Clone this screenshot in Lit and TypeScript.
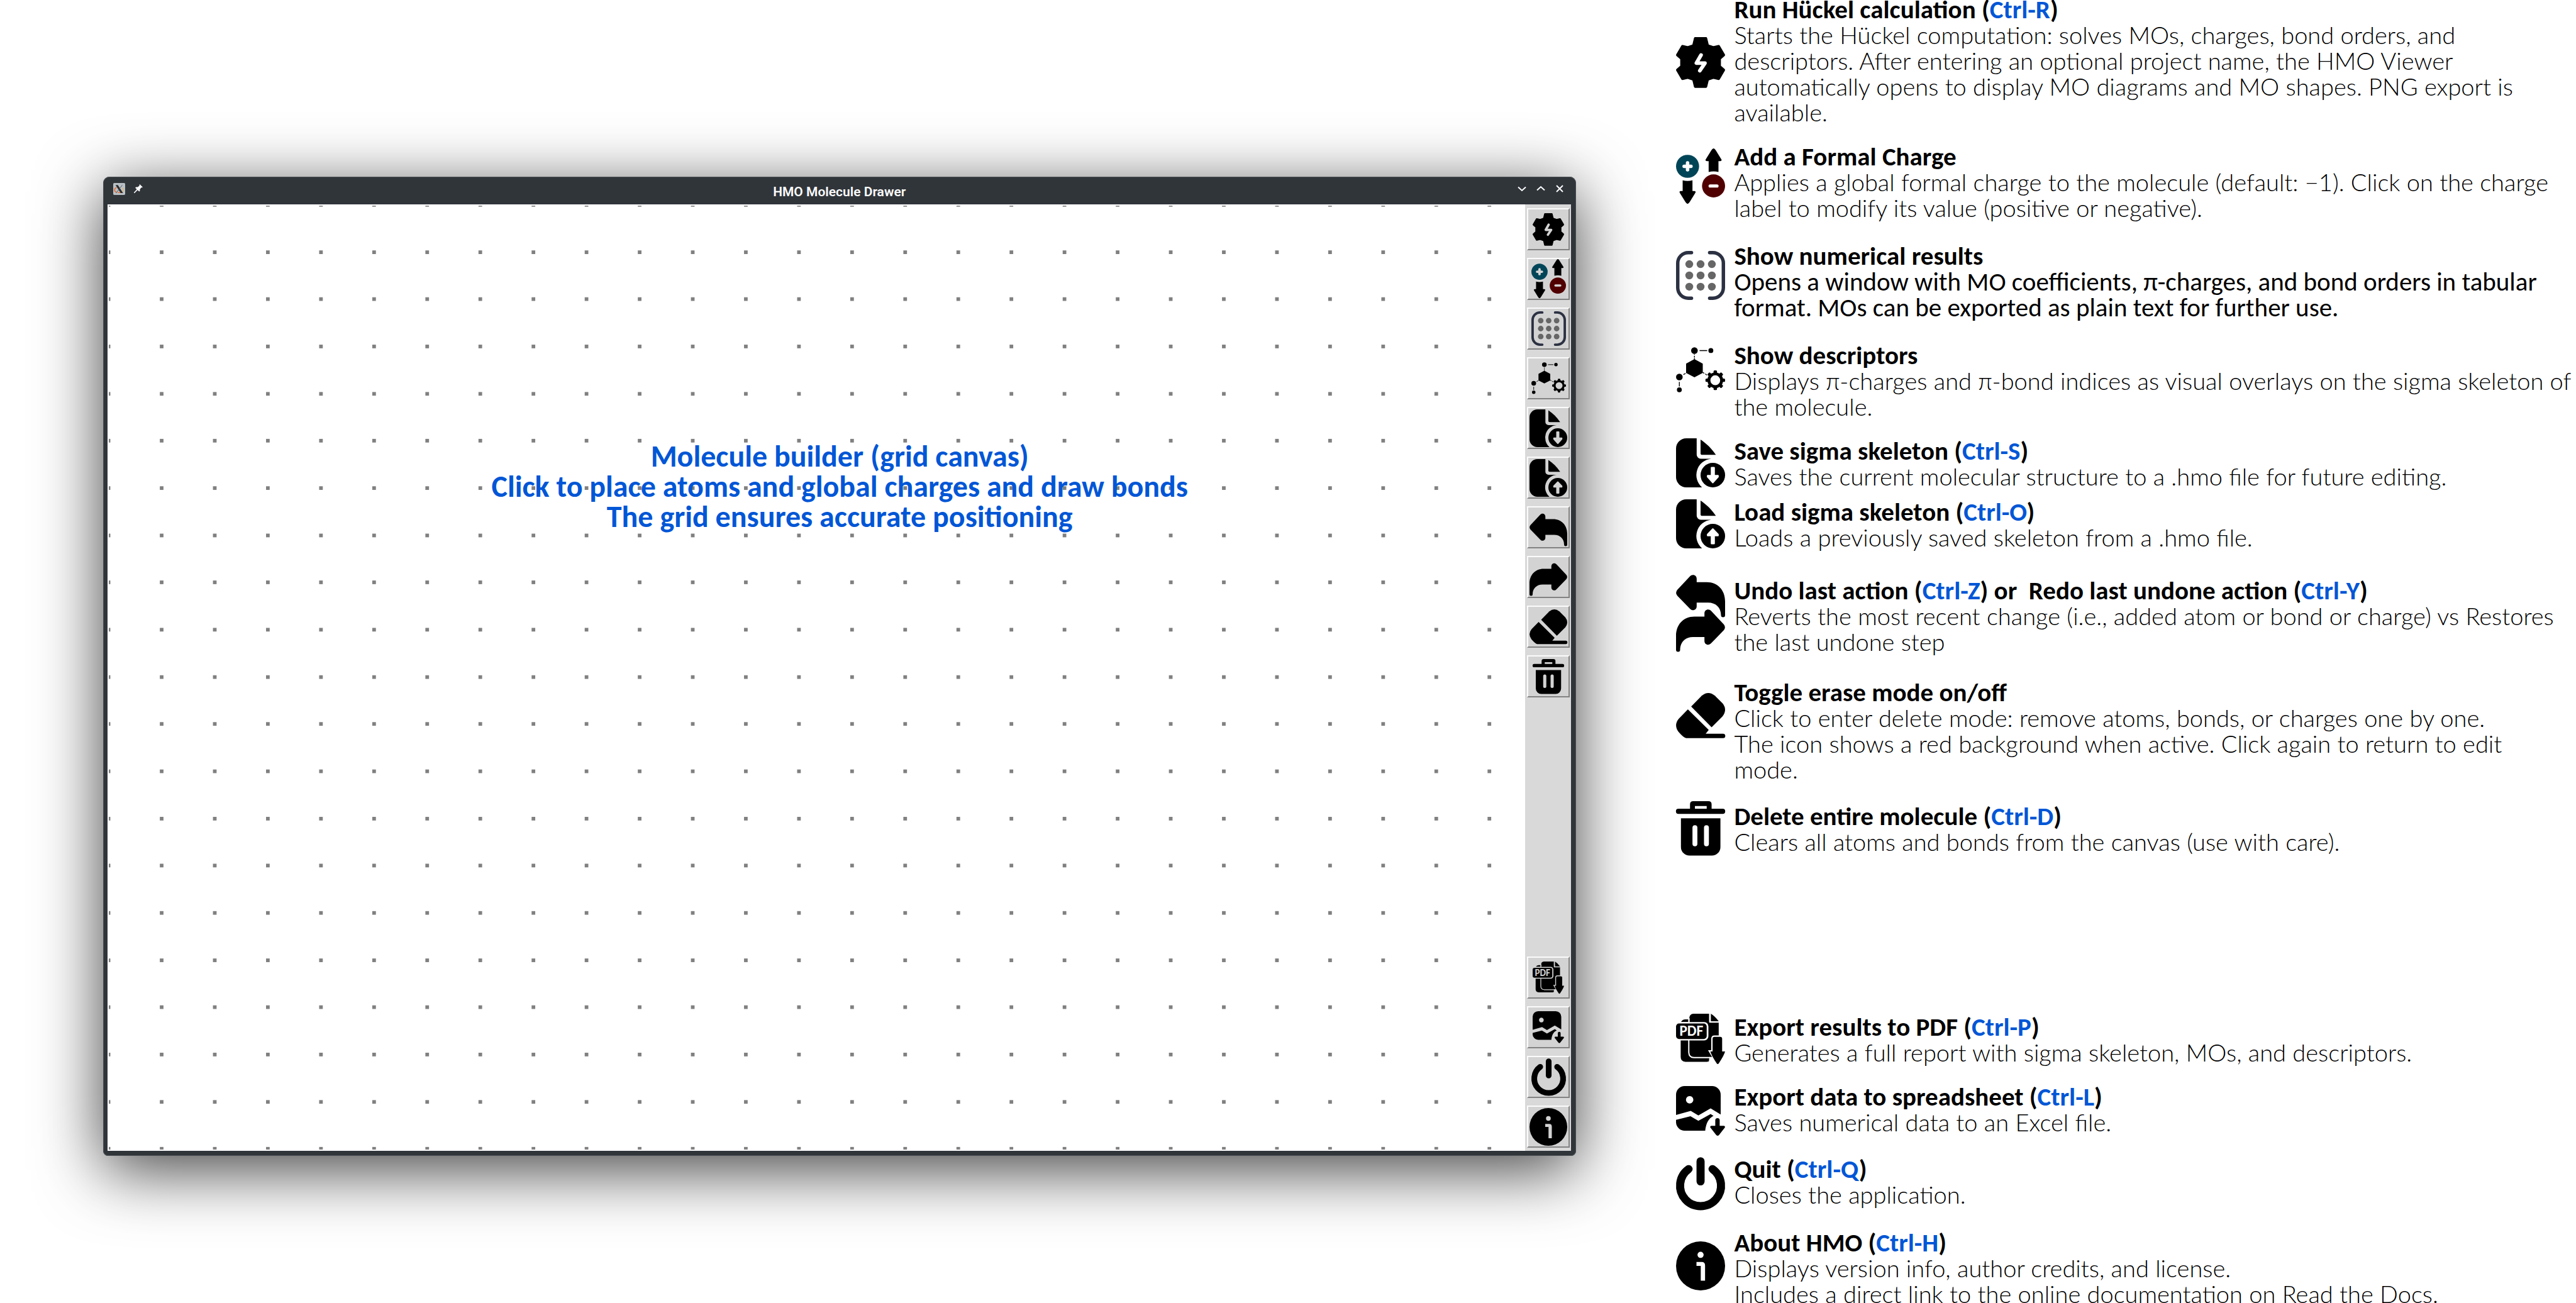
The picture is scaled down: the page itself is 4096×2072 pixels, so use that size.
import { LitElement, html, svg, css, type SVGTemplateResult, type TemplateResult } from "lit";
import { customElement, property } from "lit/decorators.js";

interface Glyph {
  box: string;
  art: SVGTemplateResult;
}

const sheet = svg`
  <path d="M5 0H10.1V8a2 2 0 0 0 2 2H17.2A8 8 0 0 0 12.7 24H5a5 5 0 0 1-5-5V5a5 5 0 0 1 5-5z"/>
  <path d="M12 .6C15 2.6 17.4 5 19.5 8.1H12.8Q12 8.1 12 7.3z"/>
  <circle cx="18" cy="18" r="6"/>`;

const undoArrow = svg`<path d="M.6 7.4 6.8.8C8-.5 10.1.1 10.1 2V3.6H15C20.5 3.6 24 7.6 24 13V19.8a1 1 0 0 1-2 0C22 16 19.4 13.6 15.7 13.6H10.1V15.5C10.1 17.3 8 18 6.8 16.6L.6 10.2Q-.5 8.8.6 7.4z"/>`;

const gearTeeth = [0, 45, 90, 135, 180, 225, 270, 315];

const glyphs: Record<string, Glyph> = {
  run: {
    box: "0 0 20 20.7",
    art: svg`
      <path stroke="currentColor" stroke-width="1" stroke-linejoin="round" d="M7.8.5H12.2L12.9 3.4 15.2 4.2 17.4 3.7 19.5 7.3 17.8 8.8V11.9L19.5 13.4 17.4 17 15.2 16.5 12.9 17.3 12.2 20.2H7.8L7.1 17.3 4.8 16.5 2.6 17 .5 13.4 2.2 11.9V8.8L.5 7.3 2.6 3.7 4.8 4.2 7.1 3.4z"/>
      <path class="cut-line" stroke-width="1.5" stroke-linecap="round" stroke-linejoin="round" d="M10.2 7.3 8.3 10.6H11.8L9.7 13.7"/>`,
  },
  charge: {
    box: "0 0 20 22.6",
    art: svg`
      <circle cx="4.7" cy="7.3" r="4.7" fill="#004557"/>
      <path class="cut-line" stroke-width="1.4" stroke-linecap="round" d="M4.7 5.9V8.7M3.3 7.3H6.1"/>
      <circle cx="15.3" cy="15.3" r="4.7" fill="#500000"/>
      <path class="cut-line" stroke-width="1.3" stroke-linecap="round" d="M13.9 15.3H16.7"/>
      <path d="M15.3 0Q15.7 0 16.2 .8L18.5 4.5Q18.8 5.2 18 5.2H17.3V9.6Q15.3 9.1 13.3 9.6V5.2H12.6Q11.8 5.2 12.1 4.5L14.4.8Q14.9 0 15.3 0z"/>
      <path d="M4.7 22.6Q5.1 22.6 5.6 21.8L7.9 18.1Q8.2 17.4 7.4 17.4H6.7V13Q4.7 13.5 2.7 13V17.4H2Q1.2 17.4 1.5 18.1L3.8 21.8Q4.3 22.6 4.7 22.6z"/>`,
  },
  matrix: {
    box: "0 0 20 20",
    art: svg`
      <path fill="none" stroke="#2b3142" stroke-width="1.4" stroke-linecap="round" d="M6.3.7H5A4.3 4.3 0 0 0 .7 5V15A4.3 4.3 0 0 0 5 19.3H6.3M13.7.7H15A4.3 4.3 0 0 1 19.3 5V15A4.3 4.3 0 0 1 15 19.3H13.7"/>
      ${[5.4, 10, 14.6].map((y) => [5.4, 10, 14.6].map((x) => svg`<circle cx=${x} cy=${y} r="1.6" fill="#666"/>`))}`,
  },
  descriptors: {
    box: "0 0 20 18.5",
    art: svg`
      <circle cx="7.5" cy="1.4" r="1.35"/><circle cx="14.2" cy="1.4" r="1"/>
      <circle cx="1.35" cy="12.2" r="1.35"/><circle cx="1.35" cy="17.4" r="1"/>
      <path fill="none" stroke="currentColor" stroke-width=".35" d="M9.6 1.4H12.7M1.35 14.2V16M7.5 2.8V3.1M7.5 3.5V4.2M7.5 4.5V5M3 11.2 3.9 10.7M4.2 10.5 4.6 10.3M10.9 10.3 11.5 10.7M11.9 10.9 12.6 11.4"/>
      <path d="M7.5 4.9 10.9 6.7V10.5L7.5 12.3 4.1 10.5V6.7z"/>
      <circle cx="16" cy="13.5" r="2.6" fill="none" stroke="currentColor" stroke-width="1.2"/>
      ${gearTeeth.map((a) => svg`<rect x="15.3" y="9.5" width="1.4" height="1.4" rx=".4" transform="rotate(${a} 16 13.5)"/>`)}`,
  },
  save: {
    box: "0 0 24 24",
    art: svg`${sheet}<path class="cut" stroke-width=".8" stroke-linejoin="round" d="M18 21.6 15.5 18.8V18.3H17.4V14.4H18.6V18.3H20.5V18.8z"/>`,
  },
  load: {
    box: "0 0 24 24",
    art: svg`${sheet}<path class="cut" stroke-width=".8" stroke-linejoin="round" d="M18 14.6 15.5 17.2V17.7H17.4V21.6H18.6V17.7H20.5V17.2z"/>`,
  },
  undo: { box: "0 -3.4 24 24.2", art: undoArrow },
  redo: { box: "0 -3.4 24 24.2", art: svg`<g transform="translate(24) scale(-1 1)">${undoArrow}</g>` },
  undoRedo: {
    box: "0 0 24 37.7",
    art: svg`${undoArrow}<g transform="translate(24 16.9) scale(-1 1)">${undoArrow}</g>`,
  },
  erase: {
    box: "0 0 24 22.2",
    art: svg`
      <path d="M7.4 6.6 12.6 1.3Q15.8-1.3 19 1.3L22.8 5.1Q25.2 8.2 22.8 11.4L17.4 16.8z"/>
      <path d="M5.8 8 16 18.1 14.5 19.9H23a1.1 1.1 0 0 1 0 2.2H5Q3.8 22 1.2 19-1.2 15.7 1.3 12.6z"/>`,
  },
  trash: {
    box: "0 0 20 22.2",
    art: svg`
      <path fill-rule="evenodd" d="M7 0H13.2Q14.5 0 14.5 1.3V3.1H19a1 1 0 0 1 0 2.1H1A1 1 0 0 1 1 3.1H5.7V1.3Q5.7 0 7 0zM7.7 2V3.1H12.5V2z"/>
      <path fill-rule="evenodd" d="M2 7H18.1V18.7A3.5 3.5 0 0 1 14.6 22.2H5.5A3.5 3.5 0 0 1 2 18.7zM6.7 10.8V17.4a1 1 0 0 0 2 0V10.8a1 1 0 0 0-2 0zM11.4 10.8V17.4a1 1 0 0 0 2 0V10.8a1 1 0 0 0-2 0z"/>`,
  },
  pdf: {
    box: "0 0 20 20.6",
    art: svg`
      <path d="M2 3.4Q2.6 2.3 3.8 2.3H5V3.4z"/>
      <path d="M1.9 10.4H13.6V17.5L13.4 19.4 12.6 19.6H3.8Q1.9 19.4 1.9 17.6z"/>
      <path d="M7.1 0H13.5V3.4H17.4V15.6Q17.2 17.5 15.4 17.6H7.4Q5.4 17.5 5.4 15.6V1.8Q5.5.1 7.1 0z"/>
      <path d="M14.2 0Q15.9 1 17.4 3.1H14.2z"/>
      <path class="cut-line" stroke-width=".5" d="M13.8 0V3.4H17.5M5.2 10.6V15.8Q5.3 17.8 7.3 17.9H14M5.3 3.4V1.8"/>
      <rect class="cut" stroke-width="1" x="0" y="3.9" width="12.7" height="6.5" rx="1.2"/>
      <rect x="0" y="4" width="12.5" height="6.3" rx="1.2"/>
      <text class="cut-text" x="6.25" y="9.1" text-anchor="middle">PDF</text>
      <path class="cut" stroke-width="1.1" d="M15.7 9.4H18Q18.8 9.4 18.8 10.2V15.4H20L17 20.5 14 15.4H14.9V10.2Q14.9 9.4 15.7 9.4z"/>
      <path d="M15.7 9.4H18Q18.8 9.4 18.8 10.2V15.4H20Q19.6 17 17.5 20.1 17 20.9 16.5 20.1 14.4 17 14 15.4H14.9V10.2Q14.9 9.4 15.7 9.4z"/>`,
  },
  spreadsheet: {
    box: "0 0 20 20.3",
    art: svg`
      <path fill-rule="evenodd" d="M3.5 0H14.7A3.5 3.5 0 0 1 18.2 3.5V11.6L14.1 9.1 9.1 12 6 10.1 0 11.8V3.5A3.5 3.5 0 0 1 3.5 0zM5.5 4.1a1.5 1.5 0 1 0 .1 0z"/>
      <path d="M0 13.8 5.9 12.3 9.1 14.2 14.1 11.4 15.3 12.2C13 13.3 12.2 15.6 11.9 18.2H3.5A3.5 3.5 0 0 1 0 14.9z"/>
      <path d="M16.9 13.1Q17.8 13.1 17.8 14V16.2H19.6Q20.3 16.6 19.7 17.2L17.5 20Q17 20.5 16.4 20L14.2 17.2Q13.6 16.6 14.3 16.2H16V14Q16 13.1 16.9 13.1z"/>`,
  },
  quit: {
    box: "0 0 20 21.7",
    art: svg`<path fill="none" stroke="currentColor" stroke-width="3.3" stroke-linecap="round" d="M5.1 4.9A8.35 8.35 0 1 0 14.9 4.9M10 1.7V9.9"/>`,
  },
  about: {
    box: "0 0 24 24",
    art: svg`
      <circle cx="12" cy="12" r="12"/>
      <circle class="cut" cx="12" cy="6.6" r="1.5"/>
      <path class="cut" d="M10 10.1H12.6Q14.2 10.1 14.2 11.8V19.2H12.1V12H10z"/>`,
  },
};

@customElement("hmo-icon")
export class HmoIcon extends LitElement {
  static styles = css`
    :host { display: block; color: #000; }
    svg { display: block; width: 100%; fill: currentColor; overflow: visible; }
    .cut { fill: var(--paper, #fff); }
    .cut[stroke-width] { stroke: var(--paper, #fff); }
    .cut-line { fill: none; stroke: var(--paper, #fff); }
    .cut-text { fill: var(--paper, #fff); font: 700 6px Carlito, Lato, sans-serif; }
  `;
  @property() name = "run";
  render() {
    const g = glyphs[this.name];
    return html`<svg viewBox=${g.box} aria-hidden="true">${g.art}</svg>`;
  }
}

interface Tool {
  icon: string;
  label: string;
  size: "s" | "m" | "l";
}

const mainTools: Tool[] = [
  { icon: "run", label: "Run Hückel calculation", size: "s" },
  { icon: "charge", label: "Add a Formal Charge", size: "m" },
  { icon: "matrix", label: "Show numerical results", size: "m" },
  { icon: "descriptors", label: "Show descriptors", size: "m" },
  { icon: "save", label: "Save sigma skeleton", size: "l" },
  { icon: "load", label: "Load sigma skeleton", size: "l" },
  { icon: "undo", label: "Undo last action", size: "l" },
  { icon: "redo", label: "Redo last undone action", size: "l" },
  { icon: "erase", label: "Toggle erase mode", size: "l" },
  { icon: "trash", label: "Delete entire molecule", size: "s" },
];

const fileTools: Tool[] = [
  { icon: "pdf", label: "Export results to PDF", size: "s" },
  { icon: "spreadsheet", label: "Export data to spreadsheet", size: "s" },
  { icon: "quit", label: "Quit", size: "m" },
  { icon: "about", label: "About HMO", size: "l" },
];

@customElement("hmo-window")
export class HmoWindow extends LitElement {
  static styles = css`
    :host {
      position: relative;
      display: grid;
      grid-template-rows: 44px minmax(0, 1fr);
      box-sizing: border-box;
      padding: 0 8px 8px 7px;
      background: #30353a;
      border-radius: 10px 10px 8px 8px;
      box-shadow: inset 0 0 0 1px #4b5054, 0 22px 104px rgba(0, 0, 0, 0.75);
    }
    .titlebar { display: grid; grid-template-columns: 1fr auto 1fr; align-items: center; }
    h1 { margin: 0; padding-top: 4px; font: 600 21px/40px Roboto, sans-serif; color: #fcfcfc; }
    .left, .right { display: flex; align-items: center; padding-bottom: 6px; }
    .left { gap: 14px; padding-left: 9px; }
    .right { justify-content: flex-end; padding-right: 3px; }
    .app-mark { width: 19px; height: 19px; }
    .titlebar button {
      display: grid; place-items: center; width: 30px; height: 30px; padding: 0;
      border: 0; background: none; color: #fcfcfc;
    }
    .left button { width: 14px; }
    .left button svg { width: 14px; height: 14px; }
    .titlebar button svg { display: block; }
    .right svg { width: 14px; height: 14px; fill: none; stroke: currentColor; stroke-width: 2; }
    .body { display: grid; grid-template-columns: minmax(0, 1fr) 73px; min-height: 0; }
    .canvas { min-width: 0; min-height: 0; padding: 2px; background: #fff; overflow: hidden; }
    .canvas svg { display: block; width: 100%; height: 100%; fill: #808080; }
    .tools {
      display: flex; flex-direction: column; gap: 12px;
      padding: 6px 2px 5px 3px; background: #d9d9d9;
    }
    .tools button {
      --paper: #d3d3d3;
      display: grid; place-items: center; flex: none; width: 68px; height: 67px; padding: 0;
      background: #d3d3d3; border: 2px solid; border-color: #fbfbfb #828282 #828282 #fbfbfb;
    }
    .spacer { flex: 1; }
    .s { width: 50px; }
    .m { width: 55px; }
    .l { width: 60px; }
    .hint {
      position: absolute; inset: 421px 0 auto; margin: 0; text-align: center;
      font: 700 48px/48px Carlito, Calibri, Lato, sans-serif; color: #0056d6;
    }
  `;

  private tool(t: Tool): TemplateResult {
    return html`<button type="button" aria-label=${t.label}><hmo-icon class=${t.size} name=${t.icon}></hmo-icon></button>`;
  }

  private dots(): SVGTemplateResult[] {
    const out: SVGTemplateResult[] = [];
    for (let row = 0; row <= 20; row++) {
      for (let col = 0; col < 27; col++) {
        out.push(svg`<rect x=${204 + col * 102} y=${390 + Math.round((row * 272) / 3)} width="7" height="7"/>`);
      }
    }
    return out;
  }

  render() {
    return html`
      <header class="titlebar">
        <div class="left">
          <svg class="app-mark" viewBox="0 0 23 23" aria-hidden="true">
            <rect width="23" height="23" rx="2" fill="#b9c0c5"/>
            <path d="M6.5 8.5C1 11 1.5 16.5 7 18M9 18.5H15" fill="none" stroke="#e0713c" stroke-width="2"/>
            <path d="M17 9C21 12 20 16 15.5 18" fill="none" stroke="#e3b565" stroke-width="1.4"/>
            <path d="M4.5 4H9L19 19.5H14.5z" fill="#2a2d30"/>
            <path d="M17.5 4 5.5 19.5" stroke="#565b5f" stroke-width="1.2"/>
          </svg>
          <button type="button" aria-label="Pin window">
            <svg viewBox="0 0 16 16" fill="currentColor">
              <path d="M10.5 0 16 5.3 14.6 6 13.6 5.8 10.8 9 10.8 12.2 9.4 13.2 6.6 10.6 1.2 16 0 15.9 0 14.8 5.2 9.2 2.4 6.6 3.6 5.2 6.8 5.2 10 2.5 9.8 1z"/>
            </svg>
          </button>
        </div>
        <h1>HMO Molecule Drawer</h1>
        <div class="right">
          <button type="button" aria-label="Minimize"><svg viewBox="0 0 14 14"><path d="M1 4.5 7 10 13 4.5"/></svg></button>
          <button type="button" aria-label="Maximize"><svg viewBox="0 0 14 14"><path d="M1 9.5 7 4 13 9.5"/></svg></button>
          <button type="button" aria-label="Close"><svg viewBox="0 0 14 14"><path d="M2 2 12 12M12 2 2 12"/></svg></button>
        </div>
      </header>
      <div class="body">
        <div class="canvas">
          <svg viewBox="208 395 2719 1813" preserveAspectRatio="xMinYMin slice" aria-hidden="true">${this.dots()}</svg>
        </div>
        <nav class="tools" aria-label="Tools">
          ${mainTools.map((t) => this.tool(t))}
          <div class="spacer"></div>
          ${fileTools.map((t) => this.tool(t))}
        </nav>
      </div>
      <p class="hint">Molecule builder (grid canvas)<br>Click to place atoms and global charges and draw bonds<br>The grid ensures accurate positioning</p>
    `;
  }
}

interface Entry {
  icon: string;
  title: string;
  lines: string[];
  gap: string;
  drop: string;
  strong?: boolean;
}

/* Shortcuts inside a title are written between square brackets. */
const entries: Entry[] = [
  {
    icon: "run", gap: "gap-none", drop: "drop-mid", title: "Run Hückel calculation ([Ctrl-R])",
    lines: [
      "Starts the Hückel computation: solves MOs, charges, bond orders, and",
      "descriptors. After entering an optional project name, the HMO Viewer",
      "automatically opens to display MO diagrams and MO shapes. PNG export is",
      "available.",
    ],
  },
  {
    icon: "charge", gap: "gap-28", drop: "drop-8", title: "Add a Formal Charge",
    lines: [
      "Applies a global formal charge to the molecule (default: −1). Click on the charge",
      "label to modify its value (positive or negative).",
    ],
  },
  {
    icon: "matrix", gap: "gap-34", drop: "drop-8", title: "Show numerical results", strong: true,
    lines: [
      "Opens a window with MO coefficients, π-charges, and bond orders in tabular",
      "format. MOs can be exported as plain text for further use.",
    ],
  },
  {
    icon: "descriptors", gap: "gap-34", drop: "drop-0", title: "Show descriptors",
    lines: ["Displays π-charges and π-bond indices as visual overlays on the sigma skeleton of", "the molecule."],
  },
  {
    icon: "save", gap: "gap-28", drop: "drop-up-4", title: "Save sigma skeleton ([Ctrl-S])",
    lines: ["Saves the current molecular structure to a .hmo file for future editing."],
  },
  {
    icon: "load", gap: "gap-14", drop: "drop-up-4", title: "Load sigma skeleton ([Ctrl-O])",
    lines: ["Loads a previously saved skeleton from a .hmo file."],
  },
  {
    icon: "undoRedo", gap: "gap-42", drop: "drop-up-4",
    title: "Undo last action ([Ctrl-Z]) or \u00a0Redo last undone action ([Ctrl-Y])",
    lines: ["Reverts the most recent change (i.e., added atom or bond or charge) vs Restores", "the last undone step"],
  },
  {
    icon: "erase", gap: "gap-38", drop: "drop-14", title: "Toggle erase mode on/off",
    lines: [
      "Click to enter delete mode: remove atoms, bonds, or charges one by one.",
      "The icon shows a red background when active. Click again to return to edit",
      "mode.",
    ],
  },
  {
    icon: "trash", gap: "gap-32", drop: "drop-up-4", title: "Delete entire molecule ([Ctrl-D])",
    lines: ["Clears all atoms and bonds from the canvas (use with care)."],
  },
  {
    icon: "pdf", gap: "gap-252", drop: "drop-up-4", title: "Export results to PDF ([Ctrl-P])",
    lines: ["Generates a full report with sigma skeleton, MOs, and descriptors."],
  },
  {
    icon: "spreadsheet", gap: "gap-28", drop: "drop-0", title: "Export data to spreadsheet ([Ctrl-L])",
    lines: ["Saves numerical data to an Excel file."],
  },
  {
    icon: "quit", gap: "gap-32", drop: "drop-0", title: "Quit ([Ctrl-Q])",
    lines: ["Closes the application."],
  },
  {
    icon: "about", gap: "gap-34", drop: "drop-14", title: "About HMO ([Ctrl-H])",
    lines: [
      "Displays version info, author credits, and license.",
      "Includes a direct link to the online documentation on Read the Docs.",
    ],
  },
];

@customElement("hmo-legend")
export class HmoLegend extends LitElement {
  static styles = css`
    :host { display: block; overflow: hidden; padding-left: 3px; }
    ul { margin: -6px 0 0; padding: 0; list-style: none; font: 400 41px/41px Carlito, Calibri, Lato, sans-serif; color: #000; }
    li { display: grid; grid-template-columns: 78px minmax(0, 1fr); column-gap: 14px; align-items: start; }
    .icon { display: grid; align-items: center; height: 88px; }
    .drop-mid { align-self: center; padding-top: 4px; }
    .drop-0 { margin-bottom: -8px; }
    .drop-8 { margin-top: 8px; }
    .drop-14 { margin-top: 14px; }
    .drop-up-4 { margin: -4px 0; }
    .tall { height: 122px; margin-bottom: -20px; }
    .gap-14 { margin-top: 14px; }
    .gap-28 { margin-top: 28px; }
    .gap-32 { margin-top: 32px; }
    .gap-34 { margin-top: 34px; }
    .gap-38 { margin-top: 38px; }
    .gap-42 { margin-top: 42px; }
    .gap-252 { margin-top: 252px; }
    h2 { margin: 0; font-size: 41px; line-height: 42px; font-weight: 700; white-space: nowrap; }
    kbd { font: inherit; color: #0056d6; }
    p { margin: 0; white-space: nowrap; }
    .light { font-family: Lato, Carlito, sans-serif; font-weight: 300; font-size: 38px; line-height: 0; }
  `;

  private heading(title: string): TemplateResult {
    const parts = title.split(/[[\]]/);
    return html`<h2>${parts.map((p, i) => (i % 2 ? html`<kbd>${p}</kbd>` : p))}</h2>`;
  }

  render() {
    return html`<ul>
      ${entries.map((e) => {
        const text = e.lines.map((l, i) => (i ? html`<br>${l}` : l));
        return html`<li class=${e.gap}>
          <div class="icon ${e.drop} ${e.icon === "undoRedo" ? "tall" : ""}"><hmo-icon name=${e.icon}></hmo-icon></div>
          <div>${this.heading(e.title)}<p>${e.strong ? text : html`<span class="light">${text}</span>`}</p></div>
        </li>`;
      })}
    </ul>`;
  }
}

@customElement("app-root")
export class AppRoot extends LitElement {
  static styles = css`
    :host { display: block; background: #fff; }
    main { display: grid; grid-template-columns: 65fr 35fr; grid-template-rows: 100vh; overflow: hidden; }
    .stage { display: grid; min-width: 0; box-sizing: border-box; padding: 281px 156px 234px 164px; }
    hmo-legend { min-width: 0; }
  `;
  render() {
    return html`<main>
      <div class="stage"><hmo-window></hmo-window></div>
      <hmo-legend></hmo-legend>
    </main>`;
  }
}
